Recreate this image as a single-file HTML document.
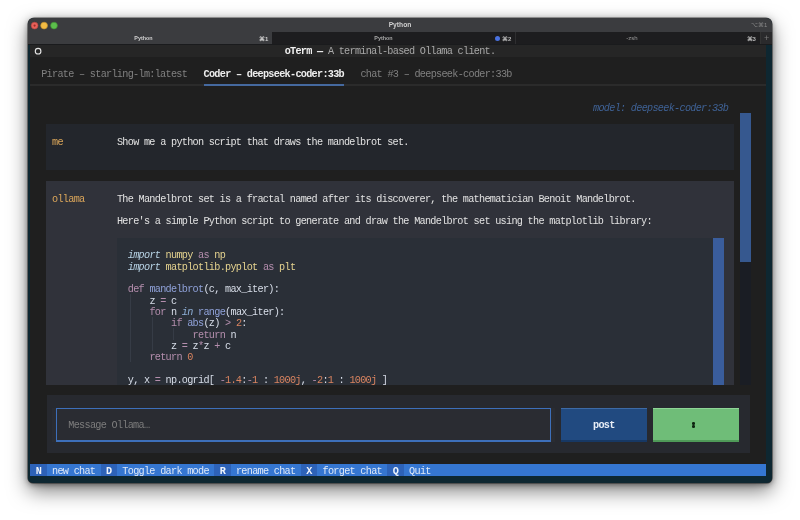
<!DOCTYPE html>
<html><head><meta charset="utf-8"><style>
html,body{margin:0;padding:0;width:800px;height:520px;overflow:hidden;background:#ffffff;}
.win{position:absolute;left:28px;top:18.2px;width:744px;height:465.1px;border-radius:6px 6px 5px 5px;background:#0e2731;box-shadow:0 2px 5px rgba(0,0,0,0.3),0 8px 20px rgba(0,0,0,0.5),0 0 10px rgba(0,0,0,0.16),0 0 0 0.6px rgba(0,0,0,0.6);overflow:hidden;}
.t{position:absolute;white-space:pre;font-family:"Liberation Mono",monospace;font-size:10.2px;letter-spacing:-0.710px;line-height:11.34px;height:11.34px;}
.ui{position:absolute;font-family:"Liberation Sans",sans-serif;white-space:pre;}
</style></head><body style="will-change:transform">
<div class="win"></div>
<div style="position:absolute;left:28px;top:18.2px;width:744px;height:465.1px;border-radius:6px 6px 5px 5px;overflow:hidden;">
 <div style="position:absolute;left:0;top:0;width:744px;height:13.8px;background:#3b3c3f;"></div>
 <div style="position:absolute;left:0;top:13.8px;width:744px;height:12px;background:#1d1d1f;"></div>
 <div style="position:absolute;left:0;top:13.8px;width:244px;height:12px;background:#3b3c3f;"></div>
 <div style="position:absolute;left:487px;top:13.8px;width:0.8px;height:12px;background:#2e2e30;"></div>
 <div style="position:absolute;left:731.5px;top:13.8px;width:12.5px;height:12px;background:#2a2a2c;border-left:0.8px solid #333;"></div>
 <svg style="position:absolute;left:0;top:0" width="40" height="14"><circle cx="6.6" cy="7.6" r="3.4" fill="#e8615a" stroke="#b8453f" stroke-width="0.6"/><circle cx="6.6" cy="7.6" r="1.1" fill="#9a2d28"/><circle cx="16.1" cy="7.6" r="3.4" fill="#f2bb44" stroke="#c4902c" stroke-width="0.6"/><circle cx="26.0" cy="7.6" r="3.4" fill="#5cbe4c" stroke="#3f9133" stroke-width="0.6"/></svg>
 
 
</div>
<div class="ui" style="left:380px;top:21.2px;width:40px;text-align:center;font-size:6.7px;font-weight:bold;color:#cfcfcf;">Python</div>
<div class="ui" style="left:751px;top:20.5px;font-size:6px;color:#8a8a8a;">⌥⌘1</div>
<div class="ui" style="left:123.5px;top:35.3px;width:40px;text-align:center;font-size:5.4px;font-weight:bold;color:#d0d0d0;">Python</div>
<div class="ui" style="left:259px;top:35px;font-size:6px;font-weight:bold;color:#d0d0d0;">⌘1</div>
<div class="ui" style="left:363.5px;top:35.3px;width:40px;text-align:center;font-size:5.4px;font-weight:bold;color:#a8a8a8;">Python</div>
<div style="position:absolute;left:495.2px;top:35.6px;width:5px;height:5px;border-radius:50%;background:#4a72e0;"></div>
<div class="ui" style="left:502px;top:35px;font-size:6px;font-weight:bold;color:#b8b8b8;">⌘2</div>
<div class="ui" style="left:612px;top:35px;width:40px;text-align:center;font-size:6px;color:#9a9a9a;">-zsh</div>
<div class="ui" style="left:746.5px;top:35px;font-size:6px;font-weight:bold;color:#b8b8b8;">⌘3</div>
<div class="ui" style="left:764px;top:33.2px;font-size:9px;color:#7a7a7a;">+</div>
<div style="position:absolute;left:30.40px;top:44.00px;width:735.76px;height:431.72px;background:#1f1f1f;"></div>
<div style="position:absolute;left:30.40px;top:44.00px;width:735.76px;height:12.80px;background:#262626;"></div>
<div style="position:absolute;left:28.00px;top:43.60px;width:744.00px;height:1.20px;background:#1a1b1d;"></div>
<svg style="position:absolute;left:30px;top:44px" width="20" height="14"><circle cx="8.1" cy="7.2" r="2.8" fill="none" stroke="#e6e6e6" stroke-width="1.15"/></svg>
<div class="t" style="left:284.67px;top:46.20px;"><span style="font-weight:bold;color:#f0f0f0">oTerm — </span><span style="color:#a8a8a8">A terminal-based Ollama client.</span></div>
<div class="t" style="left:41.22px;top:68.88px;"><span style="color:#808080">Pirate – starling-lm:latest</span></div>
<div class="t" style="left:203.52px;top:68.88px;"><span style="font-weight:bold;color:#eeeeee">Coder – deepseek-coder:33b</span></div>
<div class="t" style="left:360.41px;top:68.88px;"><span style="color:#808080">chat #3 – deepseek-coder:33b</span></div>
<div style="position:absolute;left:30.40px;top:84.42px;width:735.76px;height:1.40px;background:#2b2b2b;"></div>
<div style="position:absolute;left:203.52px;top:84.42px;width:140.66px;height:1.40px;background:#45699f;"></div>
<div class="t" style="left:593.04px;top:102.90px;"><span style="font-style:italic;color:#3f6296">model: deepseek-coder:33b</span></div>
<div style="position:absolute;left:45.83px;top:124.18px;width:687.87px;height:45.36px;background:#23262c;"></div>
<div class="t" style="left:52.04px;top:136.92px;"><span style="color:#dba65a">me</span></div>
<div class="t" style="left:116.96px;top:136.92px;"><span style="color:#e2e2e2">Show me a python script that draws the mandelbrot set.</span></div>
<div style="position:absolute;left:45.83px;top:180.88px;width:687.87px;height:204.12px;background:#30323a;"></div>
<div class="t" style="left:52.04px;top:193.62px;"><span style="color:#dba65a">ollama</span></div>
<div class="t" style="left:116.96px;top:193.62px;"><span style="color:#e2e2e2">The Mandelbrot set is a fractal named after its discoverer, the mathematician Benoit Mandelbrot.</span></div>
<div class="t" style="left:116.96px;top:216.30px;"><span style="color:#e2e2e2">Here&#x27;s a simple Python script to generate and draw the Mandelbrot set using the matplotlib library:</span></div>
<div style="position:absolute;left:116.96px;top:237.58px;width:606.82px;height:147.42px;background:#2a2f37;"></div>
<div style="position:absolute;left:712.96px;top:237.58px;width:10.82px;height:147.42px;background:#3a5d9c;"></div>
<div class="t" style="left:127.78px;top:250.32px;"><span style="font-style:italic;color:#b8d4e6">import</span><span style="color:#d8dee9"> </span><span style="color:#e5d38f">numpy</span><span style="color:#d8dee9"> </span><span style="color:#b48ead">as</span><span style="color:#d8dee9"> </span><span style="color:#e5d38f">np</span></div>
<div class="t" style="left:127.78px;top:261.66px;"><span style="font-style:italic;color:#b8d4e6">import</span><span style="color:#d8dee9"> </span><span style="color:#e5d38f">matplotlib.pyplot</span><span style="color:#d8dee9"> </span><span style="color:#b48ead">as</span><span style="color:#d8dee9"> </span><span style="color:#e5d38f">plt</span></div>
<div class="t" style="left:127.78px;top:284.34px;"><span style="color:#b48ead">def</span><span style="color:#d8dee9"> </span><span style="color:#8fa1d8">mandelbrot</span><span style="color:#d8dee9">(c, max_iter):</span></div>
<div class="t" style="left:127.78px;top:295.68px;"><span style="color:#d8dee9">    z </span><span style="color:#b48ead">=</span><span style="color:#d8dee9"> c</span></div>
<div class="t" style="left:127.78px;top:307.02px;"><span style="color:#d8dee9">    </span><span style="color:#b48ead">for</span><span style="color:#d8dee9"> n </span><span style="font-style:italic;color:#8fb0d8">in</span><span style="color:#d8dee9"> </span><span style="color:#8fa1d8">range</span><span style="color:#d8dee9">(max_iter):</span></div>
<div class="t" style="left:127.78px;top:318.36px;"><span style="color:#d8dee9">        </span><span style="color:#b48ead">if</span><span style="color:#d8dee9"> </span><span style="color:#8fa1d8">abs</span><span style="color:#d8dee9">(z) </span><span style="color:#b48ead">&gt;</span><span style="color:#d8dee9"> </span><span style="color:#dc8560">2</span><span style="color:#d8dee9">:</span></div>
<div class="t" style="left:127.78px;top:329.70px;"><span style="color:#d8dee9">            </span><span style="color:#b48ead">return</span><span style="color:#d8dee9"> n</span></div>
<div class="t" style="left:127.78px;top:341.04px;"><span style="color:#d8dee9">        z </span><span style="color:#b48ead">=</span><span style="color:#d8dee9"> z</span><span style="color:#b48ead">*</span><span style="color:#d8dee9">z </span><span style="color:#b48ead">+</span><span style="color:#d8dee9"> c</span></div>
<div class="t" style="left:127.78px;top:352.38px;"><span style="color:#d8dee9">    </span><span style="color:#b48ead">return</span><span style="color:#d8dee9"> </span><span style="color:#dc8560">0</span></div>
<div class="t" style="left:127.78px;top:375.06px;"><span style="color:#d8dee9">y, x </span><span style="color:#b48ead">=</span><span style="color:#d8dee9"> np.ogrid[ </span><span style="color:#b48ead">-</span><span style="color:#dc8560">1.4</span><span style="color:#d8dee9">:</span><span style="color:#b48ead">-</span><span style="color:#dc8560">1</span><span style="color:#d8dee9"> : </span><span style="color:#dc8560">1000j</span><span style="color:#d8dee9">, </span><span style="color:#b48ead">-</span><span style="color:#dc8560">2</span><span style="color:#d8dee9">:</span><span style="color:#dc8560">1</span><span style="color:#d8dee9"> : </span><span style="color:#dc8560">1000j</span><span style="color:#d8dee9"> ]</span></div>
<div style="position:absolute;left:130.18px;top:294.28px;width:0.80px;height:68.04px;background:rgba(120,130,150,0.16);"></div>
<div style="position:absolute;left:151.82px;top:316.96px;width:0.80px;height:34.02px;background:rgba(120,130,150,0.16);"></div>
<div style="position:absolute;left:173.46px;top:328.30px;width:0.80px;height:11.34px;background:rgba(120,130,150,0.16);"></div>
<div style="position:absolute;left:739.91px;top:112.84px;width:10.82px;height:148.96px;background:#36588f;"></div>
<div style="position:absolute;left:739.91px;top:261.80px;width:10.82px;height:123.20px;background:#1a1d24;"></div>
<div style="position:absolute;left:46.63px;top:394.74px;width:703.30px;height:58.30px;background:#27292f;"></div>
<div style="position:absolute;left:52.04px;top:407.68px;width:503.13px;height:34.02px;background:#2a2c32;"></div>
<div style="position:absolute;left:56.10px;top:407.68px;width:495.01px;height:1.40px;background:#3d6fba;"></div>
<div style="position:absolute;left:56.10px;top:440.30px;width:495.01px;height:1.40px;background:#3d6fba;"></div>
<div style="position:absolute;left:56.10px;top:407.68px;width:1.35px;height:34.02px;background:#3d6fba;"></div>
<div style="position:absolute;left:549.76px;top:407.68px;width:1.35px;height:34.02px;background:#3d6fba;"></div>
<div class="t" style="left:68.27px;top:420.42px;"><span style="color:#7c7c7c">Message Ollama…</span></div>
<div style="position:absolute;left:560.58px;top:407.68px;width:86.56px;height:34.02px;background:#214a80;"></div>
<div style="position:absolute;left:560.58px;top:407.68px;width:86.56px;height:1.40px;background:#3d6aa6;"></div>
<div style="position:absolute;left:560.58px;top:440.30px;width:86.56px;height:1.40px;background:#173864;"></div>
<div class="t" style="left:593.04px;top:420.42px;"><span style="font-weight:bold;color:#e8eef6">post</span></div>
<div style="position:absolute;left:652.55px;top:407.68px;width:86.56px;height:34.02px;background:#6fbd78;"></div>
<div style="position:absolute;left:652.55px;top:407.68px;width:86.56px;height:1.40px;background:#8fd497;"></div>
<div style="position:absolute;left:652.55px;top:440.30px;width:86.56px;height:1.40px;background:#4f9a58;"></div>
<div style="position:absolute;left:692.40px;top:422.30px;width:2.60px;height:2.60px;background:#0e2411;border-radius:50%"></div>
<div style="position:absolute;left:692.40px;top:425.10px;width:2.60px;height:2.60px;background:#0e2411;border-radius:50%"></div>
<div style="position:absolute;left:30.40px;top:464.38px;width:735.76px;height:11.34px;background:#3576d1;"></div>
<div style="position:absolute;left:30.40px;top:464.38px;width:16.23px;height:11.34px;background:#2d62b8;"></div>
<div class="t" style="left:30.40px;top:465.78px;"><span style="font-weight:bold;color:#eef3fb"> N </span></div>
<div class="t" style="left:46.63px;top:465.78px;"><span style="color:#dfe9f8"> new chat </span></div>
<div style="position:absolute;left:100.73px;top:464.38px;width:16.23px;height:11.34px;background:#2d62b8;"></div>
<div class="t" style="left:100.73px;top:465.78px;"><span style="font-weight:bold;color:#eef3fb"> D </span></div>
<div class="t" style="left:116.96px;top:465.78px;"><span style="color:#dfe9f8"> Toggle dark mode </span></div>
<div style="position:absolute;left:214.34px;top:464.38px;width:16.23px;height:11.34px;background:#2d62b8;"></div>
<div class="t" style="left:214.34px;top:465.78px;"><span style="font-weight:bold;color:#eef3fb"> R </span></div>
<div class="t" style="left:230.57px;top:465.78px;"><span style="color:#dfe9f8"> rename chat </span></div>
<div style="position:absolute;left:300.90px;top:464.38px;width:16.23px;height:11.34px;background:#2d62b8;"></div>
<div class="t" style="left:300.90px;top:465.78px;"><span style="font-weight:bold;color:#eef3fb"> X </span></div>
<div class="t" style="left:317.13px;top:465.78px;"><span style="color:#dfe9f8"> forget chat </span></div>
<div style="position:absolute;left:387.46px;top:464.38px;width:16.23px;height:11.34px;background:#2d62b8;"></div>
<div class="t" style="left:387.46px;top:465.78px;"><span style="font-weight:bold;color:#eef3fb"> Q </span></div>
<div class="t" style="left:403.69px;top:465.78px;"><span style="color:#dfe9f8"> Quit </span></div>
</body></html>
